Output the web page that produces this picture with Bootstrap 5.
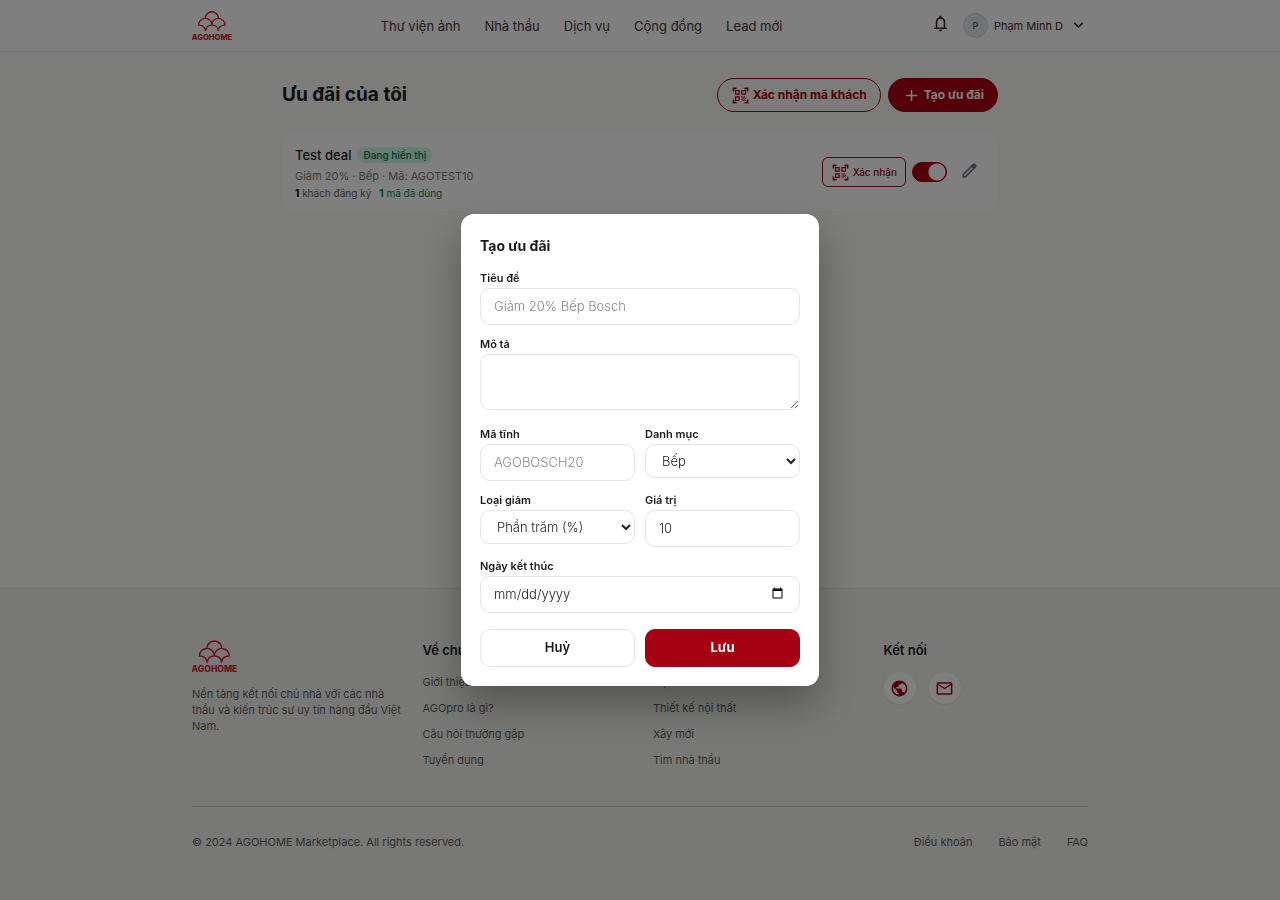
<!DOCTYPE html>
<html lang="vi">
<head>
<meta charset="utf-8">
<meta name="viewport" content="width=device-width, initial-scale=1">
<title>Ưu đãi của tôi – AGOHOME</title>
<link href="https://cdn.jsdelivr.net/npm/bootstrap@5.3.0/dist/css/bootstrap.min.css" rel="stylesheet">
<style>
  :root { --brand: #a60013; --line: #e5e5e7; --ink: #1a1c1c; --muted: #5c5f5f; }
  body { font-family: Inter, "Noto Sans", sans-serif; font-size: 13px; line-height: 20px; color: var(--ink); background: #f9f9f5; min-height: 100vh; }
  a { text-decoration: none; color: inherit; }
  svg { display: block; fill: currentColor; flex: none; }
  .wrap { width: 100%; max-width: 896px; margin-inline: auto; }
  .wrap-narrow { width: 100%; max-width: 716px; margin-inline: auto; }

  .site-head { background: #fff; border-bottom: 1px solid #e4e4e8; }
  .site-head .wrap { min-height: 51px; }
  .main-nav { gap: 24px; color: #4b3436; }
  .logo { color: #d3202c; }
  .tools { gap: 13px; }
  .account { gap: 6px; }
  .avatar { width: 25px; height: 25px; background: #e3e6e8; border: 1px solid #cfd3d6; color: #5b6468; font-size: 9px; font-weight: 600; }
  .user-name { font-size: 11px; }
  .plain-btn { background: none; border: 0; padding: 0; color: #3c2a2c; }

  .page-top { padding: 26px 0 20px; }
  .page-top h1 { font-size: 19px; line-height: 28px; font-weight: 700; margin: 0; }
  .pill-group { gap: 7px; }
  .pill { height: 34px; font-size: 12px; font-weight: 700; border: 1px solid var(--brand); border-radius: 17px; gap: 3px; padding: 0 13px; }
  .brand-fill { background: var(--brand); color: #fff; }
  .brand-line { background: transparent; color: var(--brand); border: 1px solid var(--brand); }

  .deal { background: #fff; border: 1px solid #f7f7f5; border-radius: 10px; min-height: 80px; padding: 11px 18px 11px 12px; }
  .deal-title { gap: 6px; }
  .deal-name { font-size: 13px; line-height: 20px; font-weight: 500; }
  .state { font-size: 10px; line-height: 16px; font-weight: 500; color: #04704f; background: #d0f8e2; border-radius: 8px; padding: 0 6px; }
  .deal-info { font-size: 11px; line-height: 22px; color: #777a7a; }
  .deal-stats { font-size: 10px; line-height: 12px; color: #5c5f5f; }
  .used { color: #0a7f5c; }
  .deal-tools { gap: 6px; }
  .confirm { height: 30px; border-radius: 6px; font-size: 10px; font-weight: 500; padding: 0 8px; gap: 3px; }
  .toggle.form-check-input { width: 35px; height: 20px; margin: 0; background-color: var(--brand); border-color: var(--brand);
    background-image: radial-gradient(circle, #fff 8px, transparent 9px); background-size: 18px 18px; background-repeat: no-repeat; background-position: right center; }
  .edit { margin: 0 0 4px 7px; }

  .site-foot { background: #f1f1ed; border-top: 1px solid #e2e2e0; color: var(--muted); font-size: 11px; line-height: 16px; }
  .site-foot .wrap { padding: 51px 0 50px; }
  .site-foot h2 { font-size: 13px; line-height: 20px; font-weight: 600; color: var(--ink); margin: 0 0 12px; }
  .foot-cols { --bs-gutter-x: 26px; padding-bottom: 38px; }
  .foot-logo { margin-bottom: 13px; }
  .foot-list { gap: 10px; padding-top: 2px; }
  .foot-links { gap: 26px; }
  .social { gap: 13px; }
  .round { width: 32px; height: 32px; background: #fff; color: var(--brand); box-shadow: 0 1px 2px rgba(0,0,0,.08); }
  .foot-end { border-top: 1px solid #e3bebd; padding-top: 27px; }

  .shade { background: rgba(0,0,0,.5); }
  .modal-dialog { max-width: 358px; }
  .sheet { border: 0; border-radius: 13px; padding: 19px; box-shadow: 0 20px 40px rgba(0,0,0,.3); color: var(--ink); }
  .sheet h2 { font-size: 14px; line-height: 26px; font-weight: 700; margin: 0 0 12px; }
  .field { margin-bottom: 12px; }
  .field label { display: block; font-size: 11px; line-height: 15px; padding-bottom: 2px; font-weight: 600; }
  .box { display: block; width: 100%; height: 37px; border: 1px solid var(--line); border-radius: 10px; padding: 0 13px 2px; background: #fff; font-size: 13px; font-weight: 300; color: #222; }
  .box::placeholder { color: #888; }
  select.box { height: 34px; padding: 0 0 0 12px; }
  textarea.box { height: 56px; margin-bottom: 17px; }
  .pair { grid-template-columns: 1fr 1fr; column-gap: 10px; }
  .act { height: 38px; border-radius: 10px; font-size: 13px; font-weight: 600; border: 1px solid var(--line); background: #fff; color: var(--ink); padding: 0 0 2px; }
  .act.brand-fill { background: var(--brand); border-color: var(--brand); color: #fff; font-weight: 700; }
</style>
</head>
<body class="d-flex flex-column">
<svg class="d-none" aria-hidden="true">
  <symbol id="logo" viewBox="36 178 136 99">
    <path fill="none" stroke="currentColor" stroke-width="4.500" d="M81 203a22.500 22.500 0 0 1 45 0M58.500 227a22.500 22.500 0 0 1 45-3a22.500 22.500 0 0 1 45 3M58.500 226q21 0 23.500 20q2-20 21.500-20q21 0 21.500 20q2-20 23.500-20M103.500 222v5"/>
    <text x="104" y="275.500" text-anchor="middle" font-family="Inter, sans-serif" font-size="26" font-weight="800" fill="currentColor">AGOHOME</text>
  </symbol>
  <symbol id="qr" viewBox="0 0 24 24"><path d="M9.500 6.500v3h-3v-3h3M11 5H5v6h6V5zm-1.500 9.500v3h-3v-3h3M11 13H5v6h6v-6zm6.500-6.500v3h-3v-3h3M19 5h-6v6h6V5zm-6 8h1.500v1.500H13V13zm1.500 1.500H16V16h-1.500v-1.500zM16 13h1.500v1.500H16V13zm-3 3h1.500v1.500H13V16zm1.500 1.500H16V19h-1.500v-1.500zM16 16h1.500v1.500H16V16zm1.500-1.500H19V16h-1.500v-1.500zm0 3H19V19h-1.500v-1.500zM22 7h-2V4h-3V2h5v5zm0 15v-5h-2v3h-3v2h5zM2 22h5v-2H4v-3H2v5zM2 2v5h2V4h3V2H2z"/></symbol>
</svg>

<header class="site-head">
  <div class="wrap d-flex align-items-center justify-content-between">
    <a href="#" class="logo" aria-label="AGOHOME"><svg width="40" height="29"><use href="#logo"/></svg></a>
    <nav class="main-nav d-flex">
      <a href="#">Thư viện ảnh</a><a href="#">Nhà thầu</a><a href="#">Dịch vụ</a><a href="#">Cộng đồng</a><a href="#">Lead mới</a>
    </nav>
    <div class="tools d-flex align-items-center">
      <button class="plain-btn mb-1" type="button" aria-label="Thông báo"><svg width="19" height="19" viewBox="0 -960 960 960"><path d="M160-200v-80h80v-280q0-83 50-147.500T420-792v-28q0-25 17.500-42.500T480-880t42.500 17.500T540-820v28q80 20 130 84.500T720-560v280h80v80H160Zm320 120q-33 0-56.500-23.500T400-160h160q0 33-23.500 56.500T480-80ZM320-280h320v-280q0-66-47-113t-113-47q-66 0-113 47t-47 113v280Z"/></svg></button>
      <button class="plain-btn account d-flex align-items-center" type="button">
        <span class="avatar rounded-circle d-flex align-items-center justify-content-center">P</span>
        <span class="user-name">Phạm Minh D</span>
        <svg width="19" height="19" viewBox="0 -960 960 960"><path d="M480-345 240-585l56-56 184 184 184-184 56 56-240 240Z"/></svg>
      </button>
    </div>
  </div>
</header>

<main class="wrap-narrow flex-grow-1">
  <div class="page-top d-flex align-items-center justify-content-between">
    <h1>Ưu đãi của tôi</h1>
    <div class="pill-group d-flex">
      <button class="pill brand-line d-flex align-items-center" type="button"><svg width="19" height="19"><use href="#qr"/></svg>Xác nhận mã khách</button>
      <button class="pill brand-fill d-flex align-items-center" type="button"><svg width="19" height="19" viewBox="0 0 24 24"><path d="M19 13h-6v6h-2v-6H5v-2h6V5h2v6h6v2z"/></svg>Tạo ưu đãi</button>
    </div>
  </div>
  <article class="deal d-flex align-items-center justify-content-between">
    <div>
      <div class="deal-title d-flex align-items-center"><span class="deal-name">Test deal</span><span class="state">Đang hiển thị</span></div>
      <div class="deal-info">Giảm 20% · Bếp · Mã: AGOTEST10</div>
      <div class="deal-stats d-flex gap-2"><span><b class="text-black">1</b> khách đăng ký</span><span class="used"><b>1</b> mã đã dùng</span></div>
    </div>
    <div class="deal-tools d-flex align-items-center">
      <button class="confirm brand-line d-flex align-items-center" type="button"><svg width="19" height="19"><use href="#qr"/></svg>Xác nhận</button>
      <div class="form-switch p-0"><input class="toggle form-check-input float-none d-block" type="checkbox" role="switch" checked aria-label="Hiển thị ưu đãi"></div>
      <button class="plain-btn edit text-secondary" type="button" aria-label="Sửa"><svg width="19" height="19" viewBox="0 -960 960 960"><path d="M200-200h57l391-391-57-57-391 391v57Zm-80 80v-170l528-527q12-11 26.500-17t30.500-6q16 0 31 6t26 18l55 56q12 11 17.500 26t5.500 30q0 16-5.500 30.500T817-647L290-120H120Zm640-584-56-56 56 56Zm-141 85-28-29 57 57-29-28Z"/></svg></button>
    </div>
  </article>
</main>

<footer class="site-foot">
  <div class="wrap">
    <div class="row foot-cols">
      <div class="col-3 pe-0">
        <a href="#" class="logo foot-logo d-block" aria-label="AGOHOME"><svg width="45" height="33"><use href="#logo"/></svg></a>
        <p class="m-0">Nền tảng kết nối chủ nhà với các nhà thầu và kiến trúc sư uy tín hàng đầu Việt Nam.</p>
      </div>
      <div class="col-3">
        <h2>Về chúng tôi</h2>
        <ul class="foot-list list-unstyled d-flex flex-column mb-0"><li><a href="#">Giới thiệu</a></li><li><a href="#">AGOpro là gì?</a></li><li><a href="#">Câu hỏi thường gặp</a></li><li><a href="#">Tuyển dụng</a></li></ul>
      </div>
      <div class="col-3">
        <h2>Dịch vụ</h2>
        <ul class="foot-list list-unstyled d-flex flex-column mb-0"><li><a href="#">Nội thất</a></li><li><a href="#">Thiết kế nội thất</a></li><li><a href="#">Xây mới</a></li><li><a href="#">Tìm nhà thầu</a></li></ul>
      </div>
      <div class="col-3">
        <h2>Kết nối</h2>
        <div class="social d-flex">
          <a href="#" class="round rounded-circle d-flex align-items-center justify-content-center" aria-label="Website"><svg width="19" height="19" viewBox="0 0 24 24"><path d="M12 2C6.480 2 2 6.480 2 12s4.480 10 10 10 10-4.480 10-10S17.520 2 12 2zm-1 17.930c-3.950-.49-7-3.850-7-7.930 0-.62.08-1.210.21-1.790L9 15v1c0 1.100.9 2 2 2v1.930zm6.900-2.540c-.26-.81-1-1.390-1.900-1.390h-1v-3c0-.55-.45-1-1-1H8v-2h2c.55 0 1-.45 1-1V7h2c1.100 0 2-.9 2-2v-.41c2.930 1.190 5 4.060 5 7.410 0 2.080-.8 3.970-2.100 5.390z"/></svg></a>
          <a href="#" class="round rounded-circle d-flex align-items-center justify-content-center" aria-label="Email"><svg width="19" height="19" viewBox="0 0 24 24"><path d="M22 6c0-1.100-.9-2-2-2H4c-1.100 0-2 .9-2 2v12c0 1.100.9 2 2 2h16c1.100 0 2-.9 2-2V6zm-2 0l-8 5-8-5h16zm0 12H4V8l8 5 8-5v10z"/></svg></a>
        </div>
      </div>
    </div>
    <div class="foot-end d-flex justify-content-between">
      <span>© 2024 AGOHOME Marketplace. All rights reserved.</span>
      <nav class="foot-links d-flex"><a href="#">Điều khoản</a><a href="#">Bảo mật</a><a href="#">FAQ</a></nav>
    </div>
  </div>
</footer>

<div class="modal d-block shade" tabindex="-1" role="dialog" aria-modal="true" aria-labelledby="sheetTitle">
  <div class="modal-dialog modal-dialog-centered my-0 mx-auto min-vh-100">
    <form class="modal-content sheet">
      <h2 id="sheetTitle">Tạo ưu đãi</h2>
      <div class="field"><label for="dealTitle">Tiêu đề</label><input id="dealTitle" class="box" type="text" placeholder="Giảm 20% Bếp Bosch"></div>
      <div class="field mb-0"><label for="dealText">Mô tả</label><textarea id="dealText" class="box"></textarea></div>
      <div class="d-grid pair">
        <div class="field"><label for="dealCode">Mã tĩnh</label><input id="dealCode" class="box" type="text" placeholder="AGOBOSCH20"></div>
        <div class="field"><label for="dealGroup">Danh mục</label><select id="dealGroup" class="box"><option>Bếp</option></select></div>
        <div class="field"><label for="dealKind">Loại giảm</label><select id="dealKind" class="box"><option>Phần trăm (%)</option></select></div>
        <div class="field"><label for="dealValue">Giá trị</label><input id="dealValue" class="box" type="text" inputmode="numeric" value="10"></div>
      </div>
      <div class="field mb-3"><label for="dealEnd">Ngày kết thúc</label><input id="dealEnd" class="box" type="date"></div>
      <div class="d-grid pair"><button class="act" type="button">Huỷ</button><button class="act brand-fill" type="submit">Lưu</button></div>
    </form>
  </div>
</div>
<script src="https://cdn.jsdelivr.net/npm/bootstrap@5.3.0/dist/js/bootstrap.bundle.min.js"></script>
</body>
</html>
